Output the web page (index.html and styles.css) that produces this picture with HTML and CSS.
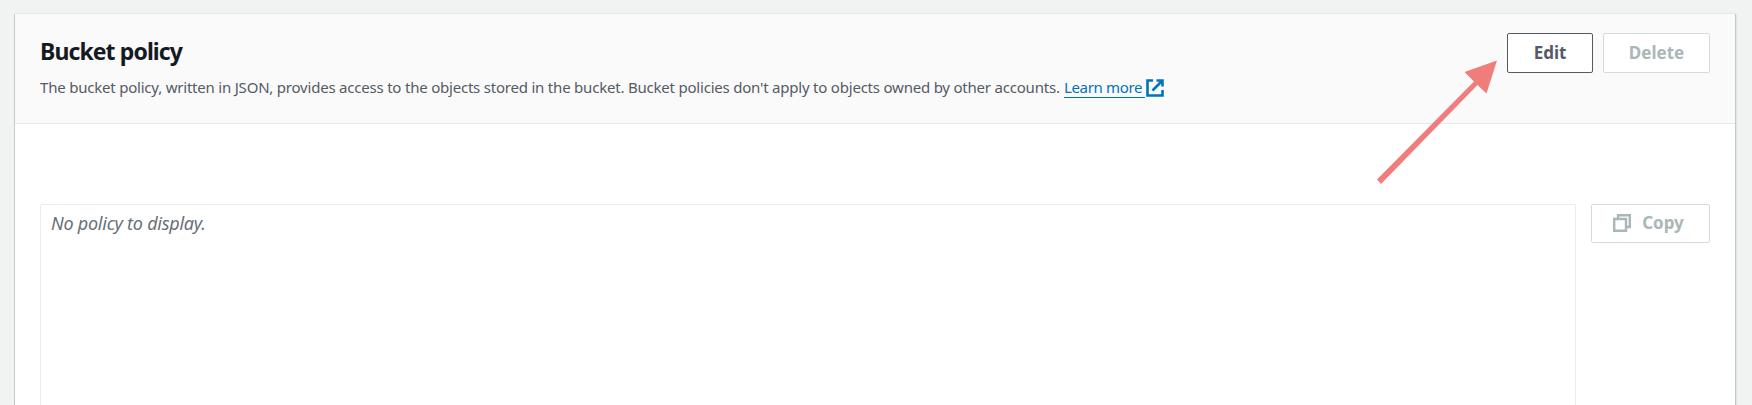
FILE: index.html
```html
<!DOCTYPE html>
<html lang="en">
<head>
<meta charset="utf-8">
<title>Bucket policy</title>
<link rel="stylesheet" href="styles.css">
</head>
<body>
<section class="card">
  <header class="card-header">
    <div class="heading">
      <h2 class="title">Bucket policy</h2>
      <p class="description"><span class="text">The bucket policy, written in JSON, provides access to the objects stored in the bucket. Bucket policies don't apply to objects owned by other accounts.</span><a class="link" href="#">Learn more</a><svg class="external" viewBox="0 0 18 18"><path d="M7 1.5H1.5v15h15V11M10.5 1.5h6v6M16 2L6.5 11.5"/></svg></p>
    </div>
    <div class="actions">
      <button class="button edit">Edit</button>
      <button class="button delete" disabled>Delete</button>
    </div>
  </header>
  <div class="card-body">
    <div class="policy"><em class="empty">No policy to display.</em></div>
    <button class="button copy" disabled><svg class="copy-icon" viewBox="0 0 18 18"><path d="M1.200 5h11.800v11.800H1.200zM5 5V1.200h11.800v11.800h-3.800"/></svg><span>Copy</span></button>
  </div>
</section>
<svg class="arrow" viewBox="0 0 122 125"><path d="M0 119.500L97 21.500L87.500 12L120 0.500L109.500 33.500L100.500 25L4 124Z"/></svg>
</body>
</html>
```
FILE: styles.css
```css
* { box-sizing: border-box; }
body {
  margin: 0;
  height: 405px;
  padding: 14px 17px 0 15px;
  overflow: hidden;
  background: #f1f3f3;
  font-family: "Noto Sans", sans-serif;
}
.card {
  display: flex;
  flex-direction: column;
  height: 391px;
  background: #fff;
  box-shadow: 0 -1px 1px #e4e8e8, -1px 0 0 #bcc3c3, 1px 0 0 #bcc3c3, 2px 1px 1px #dfe3e3;
}
.card-header {
  display: flex;
  justify-content: space-between;
  flex: none;
  height: 110px;
  padding: 19px 25px 0;
  background: #fafafa;
  border-bottom: 1px solid #e7e9e9;
}
.title {
  margin: 3px 0 0;
  font-size: 23px;
  line-height: 30px;
  font-weight: 700;
  letter-spacing: -0.9px;
  color: #16191f;
}
.description {
  display: flex;
  margin: 9px 0 0;
  font-size: 15px;
  line-height: 24px;
  letter-spacing: -0.21px;
  color: #545b64;
  white-space: nowrap;
}
.text { width: 1024px; }
.link {
  width: 81px;
  height: 23px;
  letter-spacing: -0.35px;
  color: #0073bb;
  text-decoration: none;
  border-bottom: 1px solid #0073bb;
}
.external {
  width: 18px;
  height: 18px;
  margin: 4px 0 0 1px;
  fill: none;
  stroke: #0073bb;
  stroke-width: 2.6;
}
.actions { display: flex; gap: 10px; }
.button {
  height: 40px;
  padding: 0;
  border: 1px solid #d5dbdb;
  border-radius: 2px;
  background: #fff;
  color: #aab7b8;
  font: 700 17px/24px "Noto Sans", sans-serif;
}
.edit { width: 86px; border-color: #545b64; color: #545b64; }
.delete { width: 107px; }
.card-body {
  display: flex;
  flex: 1;
  gap: 15px;
  padding: 80px 25px 0;
}
.policy {
  flex: 1;
  padding: 6px 10px 0;
  border: 1px solid #eaeded;
  border-bottom: 0;
  border-radius: 2px 2px 0 0;
  font-size: 18px;
  line-height: 24px;
  color: #687078;
}
.empty { letter-spacing: -0.25px; }
.copy {
  display: flex;
  align-items: center;
  justify-content: center;
  gap: 11px;
  width: 119px;
  height: 39px;
  padding: 0 4px 1px 0;
}
.copy-icon {
  width: 18px;
  height: 18px;
  fill: none;
  stroke: #aab7b8;
  stroke-width: 2.4;
}
.arrow {
  position: absolute;
  left: 1377px;
  top: 60px;
  width: 122px;
  height: 125px;
  fill: #f17c7c;
}
```
